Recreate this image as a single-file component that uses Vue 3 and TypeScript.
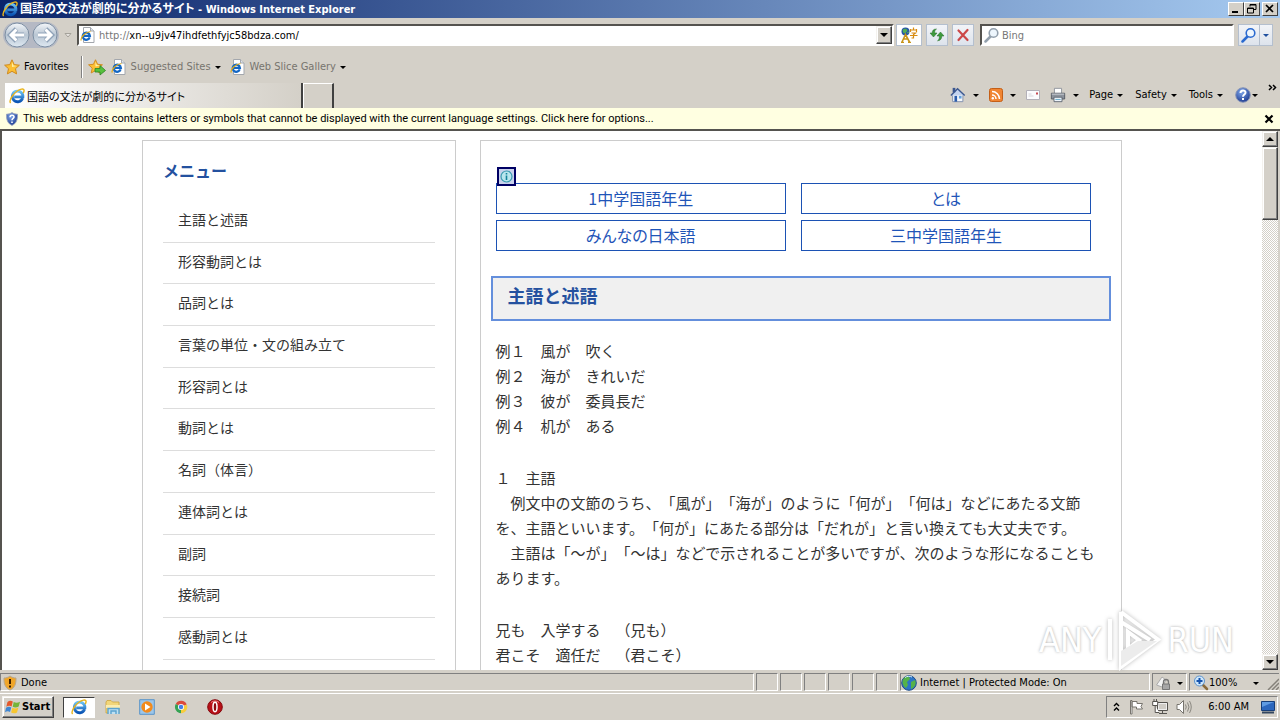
<script setup lang="ts">
import { ref } from 'vue'

const siteTitle = '国語の文法が劇的に分かるサイト'
const address = ref('xn--u9jv47ihdfethfyjc58bdza.com/')
const query = ref('')

const menu: string[] = [
  '主語と述語', '形容動詞とは', '品詞とは', '言葉の単位・文の組み立て', '形容詞とは', '動詞とは',
  '名詞（体言）', '連体詞とは', '副詞', '接続詞', '感動詞とは',
]
const adLinks: string[] = ['1中学国語年生', 'とは', 'みんなの日本語', '三中学国語年生']
const paragraphs: string[][] = [
  ['例１　風が　吹く', '例２　海が　きれいだ', '例３　彼が　委員長だ', '例４　机が　ある'],
  [
    '１　主語',
    '　例文中の文節のうち、「風が」「海が」のように「何が」「何は」などにあたる文節',
    'を、主語といいます。「何が」にあたる部分は「だれが」と言い換えても大丈夫です。',
    '　主語は「～が」「～は」などで示されることが多いですが、次のような形になることも',
    'あります。',
  ],
  ['兄も　入学する　（兄も）', '君こそ　適任だ　（君こそ）'],
]
const commands: string[] = ['Page', 'Safety', 'Tools']
</script>

<template>
  <div class="desktop">
    <svg class="defs" aria-hidden="true">
      <linearGradient id="ieBlue" x1="0" y1="0" x2="0" y2="1">
        <stop offset="0" stop-color="#6cc4f5" /><stop offset="1" stop-color="#0b55b5" />
      </linearGradient>
      <linearGradient id="steel" x1="0" y1="0" x2="0" y2="1">
        <stop offset="0" stop-color="#f4f7fa" /><stop offset=".5" stop-color="#b9c6d3" /><stop offset="1" stop-color="#dfe9f2" />
      </linearGradient>
      <radialGradient id="ball" cx=".4" cy=".3" r=".8">
        <stop offset="0" stop-color="#7ea6ea" /><stop offset="1" stop-color="#132f86" />
      </radialGradient>
      <symbol id="ie" viewBox="0 0 16 16">
        <path d="M13.6 10.2A5.3 5.3 0 1 1 13.9 8.8H5.2" fill="none" stroke="url(#ieBlue)" stroke-width="2.8" />
        <path d="M1.6 15C-.8 12 6 2.600 12.500 1.100 15.500.4 15.600 2.800 14.200 5.200" fill="none" stroke="#e9b41c" stroke-width="1.400" />
      </symbol>
      <symbol id="iepage" viewBox="0 0 16 16">
        <path d="M3.500.5h7l3.500 3.500v11.500H3.500z" fill="#fff" stroke="#a3a7ad" />
        <path d="M10.500.5v3.500H14" fill="#dde3ea" stroke="#a3a7ad" />
        <path d="M9.700 10.400A3.600 3.600 0 1 1 9.900 8.800H4" fill="none" stroke="#1467c4" stroke-width="2.200" />
        <path d="M1.300 13.500C0 11 5 5 10.500 4.500" fill="none" stroke="#e2ab17" stroke-width="1.200" />
      </symbol>
      <symbol id="star" viewBox="0 0 16 16">
        <path d="M8 .8l2.200 4.800 5.200.6-3.900 3.500 1.100 5.200L8 12.300l-4.600 2.600 1.100-5.200L.6 6.200l5.200-.6z" fill="#fcbf33" stroke="#cf8a20" />
        <path d="M8 3l1.400 3.500 3.600.4-5 1z" fill="#fff0a6" />
      </symbol>
      <symbol id="help" viewBox="0 0 16 16">
        <circle cx="8" cy="8" r="7.300" fill="url(#ball)" stroke="#8a97b8" />
        <path d="M5.500 6C5.500 2.600 10.600 2.800 10.500 5.800 10.400 7.500 8 7.700 8 9.700M8 11v2" fill="none" stroke="#fff" stroke-width="2" />
      </symbol>
      <symbol id="lens" viewBox="0 0 16 16">
        <path d="M6.500 9.500L1.500 14.500" stroke="currentColor" stroke-width="2.500" stroke-linecap="round" />
        <circle cx="9.500" cy="6" r="4.300" fill="#eef6fd" stroke="currentColor" stroke-width="1.600" />
      </symbol>
    </svg>

    <header class="titlebar">
      <svg class="i16"><use href="#ie" /></svg>
      <h1><span class="jp">{{ siteTitle }}</span> - Windows Internet Explorer</h1>
      <div class="winbtns">
        <button aria-label="Minimize"><svg viewBox="0 0 14 12"><path d="M3 9h6" stroke="#000" stroke-width="2" /></svg></button>
        <button aria-label="Restore"><svg viewBox="0 0 14 12"><path d="M5 3.500V1.500h6v5H9M5 2h6M2.500 5h6v5h-6zM2 5.500h7" fill="none" stroke="#000" /></svg></button>
        <button class="close" aria-label="Close"><svg viewBox="0 0 14 12"><path d="M3 2l7 7M10 2L3 9" stroke="#000" stroke-width="1.700" /></svg></button>
      </div>
    </header>

    <div class="addressrow">
      <div class="nav">
        <button aria-label="Back">
          <svg viewBox="0 0 26 26"><circle cx="13" cy="13" r="12" fill="url(#steel)" stroke="#7d8fa3" /><path d="M20 13H8M12.500 7L6.500 13l6 6" fill="none" stroke="#8fa2b8" stroke-width="5" /><path d="M20 13H8M12.500 7.500L7 13l5.500 5.500" fill="none" stroke="#fff" stroke-width="3" /></svg>
        </button>
        <button aria-label="Forward">
          <svg viewBox="0 0 26 26"><circle cx="13" cy="13" r="12" fill="url(#steel)" stroke="#7d8fa3" /><path d="M6 13h12M13.500 7l6 6-6 6" fill="none" stroke="#8fa2b8" stroke-width="5" /><path d="M6 13h12M13.500 7.500L19 13l-5.500 5.500" fill="none" stroke="#fff" stroke-width="3" /></svg>
        </button>
      </div>
      <button class="hist" aria-label="Recent pages"><svg viewBox="0 0 8 5"><path d="M1 .5h6L4 4z" fill="#e8e6e2" stroke="#a5a29b" /></svg></button>
      <label class="field address">
        <svg class="i16"><use href="#iepage" /></svg>
        <span class="scheme">http://</span>
        <input v-model="address" aria-label="Address" spellcheck="false">
        <button class="raised" aria-label="Show addresses"><i class="tri big"></i></button>
      </label>
      <button class="tool wide" aria-label="Compatibility and language">
        <svg viewBox="0 0 18 16"><circle cx="5.500" cy="4.500" r="4" fill="#2456a8" /><path d="M3 3l2-1 2 1-1 2-2 1zM7 6l2-1" fill="#54ae52" stroke="#54ae52" /><path d="M10 3h7M13.500.5v3M10.500 2v3M16.500 2v3M11.500 6h4l-2 1.500v3.500h-2M10 8.500h7.500" fill="none" stroke="#d88c12" stroke-width="1.200" /><path d="M2 15L5.500 7.500 9.500 15M3.500 12h4.500M1 15.500h3M8 15.500h3" fill="none" stroke="#c89418" stroke-width="1.600" /></svg>
      </button>
      <button class="tool" aria-label="Refresh">
        <svg viewBox="0 0 16 16"><path d="M1 6l3.500 4L8 6H5.700C5.500 4 6 3 7.500 2 4.500 2 3.200 3.500 3.200 6z" fill="#3e9a3c" stroke="#256c2b" stroke-width=".5" /><path d="M8 9l3.500-4L15 9h-2.200c0 3-1.500 4.600-4.300 4.800C10 12.800 10.500 11.500 10.300 9z" fill="#3e9a3c" stroke="#256c2b" stroke-width=".5" /></svg>
      </button>
      <button class="tool stop" aria-label="Stop">
        <svg viewBox="0 0 16 16"><path d="M3.500 3.500l9 9.500M12.500 3L3.500 13" stroke="#cc4848" stroke-width="2.200" stroke-linecap="round" /></svg>
      </button>
      <label class="field search">
        <svg class="i16 grey"><use href="#lens" /></svg>
        <input v-model="query" placeholder="Bing" aria-label="Search with Bing">
      </label>
      <div class="go">
        <button class="tool" aria-label="Search"><svg class="blue" viewBox="0 0 16 16"><use href="#lens" /></svg></button>
        <button class="tool slim" aria-label="Search options"><i class="tri navy"></i></button>
      </div>
    </div>

    <nav class="favrow" aria-label="Favorites bar">
      <button class="flat fav"><svg class="i16"><use href="#star" /></svg>Favorites</button>
      <span class="rule"></span>
      <button class="flat addfav" aria-label="Add to Favorites bar">
        <svg class="i18" viewBox="0 0 18 16"><use href="#star" width="15" height="15" /><path d="M7 9.500h5V6.500l5.500 5-5.500 4.500V13H7z" fill="#57c03d" stroke="#2c8425" stroke-width=".8" /></svg>
      </button>
      <button class="flat dim"><svg class="i16"><use href="#iepage" /></svg>Suggested Sites<i class="tri"></i></button>
      <button class="flat dim"><svg class="i16"><use href="#iepage" /></svg>Web Slice Gallery<i class="tri"></i></button>
    </nav>

    <div class="tabrow">
      <button class="tab"><svg class="i16"><use href="#ie" /></svg><span class="jp">{{ siteTitle }}</span></button>
      <button class="newtab" aria-label="New tab"></button>
      <div class="cmds">
        <button class="flat pic" aria-label="Home">
          <svg class="i16" viewBox="0 0 18 18"><path d="M3 9v7.500h11.500V8" fill="#f5f8fc" stroke="#7a8aa8" /><path d="M1 9.500L8.500 2l8 7.500" fill="#c3d3ee" stroke="#3b578f" stroke-width="1.600" /><path d="M3 1h3v5H3z" fill="#3b578f" /><path d="M5 10h3v6.500H5z" fill="#2b5cab" /><path d="M10 10h3v3h-3z" fill="#63a0dc" /></svg>
          <i class="tri"></i>
        </button>
        <button class="flat pic" aria-label="Feeds">
          <svg class="i14" viewBox="0 0 14 14"><rect x=".5" y=".5" width="13" height="13" rx="2" fill="#f08532" stroke="#c45f17" /><path d="M3 7a4 4 0 0 1 4 4M3 3.500A7.500 7.500 0 0 1 10.500 11" fill="none" stroke="#fff" stroke-width="1.500" /><circle cx="3.800" cy="10.300" r="1.200" fill="#fff" /></svg>
          <i class="tri"></i>
        </button>
        <button class="flat" aria-label="Read mail">
          <svg class="i14" viewBox="0 0 14 14"><path d="M.5 2.500h13v9H.5z" fill="#fbfbfd" stroke="#b3b0b8" /><path d="M2.500 8h5M2.500 6h3" stroke="#d5d3da" /><path d="M10 4.500h2v2h-2z" fill="#c84a52" /></svg>
        </button>
        <button class="flat pic" aria-label="Print">
          <svg class="i16" viewBox="0 0 18 18"><path d="M5 7V1.500h8V7" fill="#fff" stroke="#8a8f98" /><path d="M1.500 7h15v6.500h-15z" fill="#8c929c" stroke="#525860" /><path d="M2 8h14" stroke="#d4d8de" /><path d="M4.500 11.500h9v5h-9z" fill="#eef5fb" stroke="#5c6470" /><path d="M6 14h6" stroke="#5aa2c4" /></svg>
          <i class="tri"></i>
        </button>
        <button v-for="c in commands" :key="c" class="flat word">{{ c }}<i class="tri"></i></button>
        <button class="flat tight" aria-label="Help"><svg class="i16"><use href="#help" /></svg><i class="tri"></i></button>
        <button class="flat more" aria-label="More commands"><svg viewBox="0 0 10 8"><path d="M1 1l2.500 2.500L1 6M5 1l2.500 2.500L5 6" fill="none" stroke="#000" stroke-width="1.500" /></svg></button>
      </div>
    </div>

    <div class="infobar" role="status">
      <svg class="i14" viewBox="0 0 14 16"><path d="M7 .7c2 1.300 4 1.800 6.300 1.800C13.500 9 12 13 7 15.300 2 13 .5 9 .7 2.500 3 2.500 5 2 7 .7z" fill="url(#ball)" stroke="#9aa5bd" /><path d="M4.800 6C4.800 3 9.400 3 9.300 5.800 9.200 7.400 7 7.500 7 9.400M7 10.800v1.800" fill="none" stroke="#fff" stroke-width="1.800" /></svg>
      <button class="flat msg">This web address contains letters or symbols that cannot be displayed with the current language settings. Click here for options...</button>
      <button class="flat" aria-label="Dismiss"><svg class="x" viewBox="0 0 10 10"><path d="M1.500 1.500l7 7M8.500 1.500l-7 7" stroke="#000" stroke-width="2.200" /></svg></button>
    </div>

    <div class="view">
      <div class="page">
        <div class="columns">
          <aside class="side">
            <h3>メニュー</h3>
            <ul>
              <li v-for="m in menu" :key="m"><a href="#">{{ m }}</a></li>
            </ul>
          </aside>
          <main class="article">
            <div class="ads">
              <button class="adinfo" aria-label="Ad information"><svg viewBox="0 0 15 15"><circle cx="7.500" cy="7.500" r="5.500" fill="#b9e6ee" stroke="#3a9bb0" stroke-width="1.200" /><path d="M7.500 6.500v4.500M7.500 4v1.500" stroke="#14839b" stroke-width="1.600" /></svg></button>
              <a v-for="a in adLinks" :key="a" href="#">{{ a }}</a>
            </div>
            <h2>主語と述語</h2>
            <p v-for="(p, i) in paragraphs" :key="i">
              <template v-for="(line, j) in p" :key="j"><br v-if="j">{{ line }}</template>
            </p>
          </main>
        </div>
      </div>
      <div class="scroll" aria-hidden="true">
        <button class="raised" tabindex="-1"><i class="tri big up"></i></button>
        <div class="thumb raised"></div>
        <div class="track"></div>
        <button class="raised" tabindex="-1"><i class="tri big"></i></button>
      </div>
      <div class="mark">
        <span>ANY</span>
        <svg viewBox="0 0 58 64"><path d="M5 11v41M16 4l37 27.500L16 59V4M16 14l29 18M23 24v17l11-9z" fill="none" stroke="#fff" stroke-width="4" /><path d="M16 43v15l36-25H33z" fill="#ececec" /></svg>
        <span>RUN</span>
      </div>
    </div>

    <footer class="status">
      <div class="cell done">
        <svg class="i16" viewBox="0 0 16 16"><path d="M8 1c2 1.500 4 2 6 2 .3 6-1.500 10-6 12C3.500 13 1.700 9 2 3c2 0 4-.5 6-2z" fill="#f0a62a" stroke="#b5a790" /><path d="M8 4v5M8 10.500v2" stroke="#3d2000" stroke-width="2" /></svg>
        Done
      </div>
      <div v-for="n in 6" :key="n" class="cell slot"></div>
      <div class="cell zone">
        <svg class="i16" viewBox="0 0 16 16"><circle cx="8" cy="8" r="7.300" fill="#2c74c6" stroke="#1f4c88" /><path d="M3 3c3-3 6-1 6 1L6 7l1 3-2 3C2 11 0 7 3 3zM10 7l4-2c2 4-1 8-4 9z" fill="#55b248" /><path d="M4 2.500c2-1.500 5-1.500 7-.5" stroke="#d8f0ff" fill="none" /></svg>
        Internet | Protected Mode: On
      </div>
      <div class="cell prot">
        <svg class="i16" viewBox="0 0 16 16"><path d="M.5 10L6 2l4 3-4 7z" fill="#f3f3f3" stroke="#aaa" /><path d="M7.500 9V7a2 2 0 0 1 5 0v2" fill="none" stroke="#777" stroke-width="1.300" /><path d="M6.500 9h7v5.500h-7z" fill="#a6a6a6" stroke="#777" /></svg>
        <i class="tri"></i>
      </div>
      <div class="cell zoom">
        <svg class="i16" viewBox="0 0 16 16"><path d="M9 9l5 5" stroke="#8a6b3a" stroke-width="2.500" stroke-linecap="round" /><circle cx="6.500" cy="6" r="5" fill="#cde6fa" stroke="#5e93cc" /><path d="M3.500 6h6M6.500 3v6" stroke="#1553ad" stroke-width="2" /></svg>
        100%<i class="tri"></i>
        <svg class="grip" viewBox="0 0 12 12"><path d="M1 12L12 1M5 12l7-7M9 12l3-3" stroke="#85817a" stroke-width="1.500" /></svg>
      </div>
    </footer>

    <footer class="taskbar">
      <button class="start raised">
        <svg class="i16" viewBox="0 0 16 16"><path d="M2.500 3C4.500 1.500 6 1.600 7.800 2.600L6.600 7.400C5 6.500 3.300 6.500 1.300 7.700z" fill="#e5582a" /><path d="M8.700 3c2 1 4 1 6.300-.3L13.700 7.500c-2 1.200-4 1.300-6 .3z" fill="#74b43a" /><path d="M1 8.700c2-1.300 3.700-1.300 5.300-.3L5 13c-1.600-.9-3.300-.9-5 .3z" fill="#3f86d2" /><path d="M7.400 8.800c2 1 4 .9 6-.2L12 13.400c-2 1.200-4 1.200-5.900.1z" fill="#f7c62f" /></svg>
        Start
      </button>
      <button class="task on" aria-label="Internet Explorer"><svg class="i16"><use href="#ie" /></svg></button>
      <button class="task" aria-label="Explorer"><svg class="i16" viewBox="0 0 16 16"><path d="M1 3l1-1.500h4L7.500 3H14v11H1z" fill="#f2d67a" stroke="#cda53e" stroke-width=".8" /><path d="M1 6h14v3H1z" fill="#fbecaf" /><path d="M3 15V9.500h11V15M6 15v-3h5v3" fill="#bfe0f2" stroke="#5ba3cf" stroke-width="1.400" /></svg></button>
      <button class="task" aria-label="Media Player"><svg class="i16" viewBox="0 0 16 16"><path d="M.7.7h14.600v14.600H.7z" fill="#9cc6ea" stroke="#5b94c8" /><circle cx="8" cy="8" r="5.700" fill="#f28a1c" /><path d="M6 4.500v7l5.500-3.500z" fill="#fff" /></svg></button>
      <button class="task" aria-label="Chrome"><svg class="i14" viewBox="0 0 16 16"><path d="M8 8L2 4.500A7 7 0 0 1 14.500 5z" fill="#db4a3c" /><path d="M8 8l6.500-3A7 7 0 0 1 8 15z" fill="#f7cd3d" /><path d="M8 8v7A7 7 0 0 1 2 4.500z" fill="#35a253" /><circle cx="8" cy="8" r="3.500" fill="#fff" /><circle cx="8" cy="8" r="2.600" fill="#447fe8" /></svg></button>
      <button class="task" aria-label="Opera"><svg class="i16" viewBox="0 0 16 16"><circle cx="8" cy="8" r="7.300" fill="#b81018" stroke="#85070d" /><path d="M4 3.500A6 6 0 0 1 12 3.500" stroke="#ef8080" fill="none" /><ellipse cx="8" cy="8" rx="2" ry="4.700" fill="#8d0a10" stroke="#fff" stroke-width="1.500" /></svg></button>
      <div class="tray">
        <svg class="chev" viewBox="0 0 7 10"><path d="M1 4l2.500-2.500L6 4M1 8.500L3.500 6 6 8.500" fill="none" stroke="#000" stroke-width="1.400" /></svg>
        <svg class="i16" viewBox="0 0 16 16"><path d="M2.500 15V1.500h1.500V15zM4 2.500h5v2h5.500l-1.500 3 1.500 2.500H8.500v-2H4z" fill="#fff" stroke="#77746e" /></svg>
        <svg class="i16" viewBox="0 0 16 16"><path d="M5.500 3.500h10v8h-10z" fill="#eee" stroke="#55534f" /><path d="M7 5h7v5H7z" fill="#cfccc6" /><path d="M7 14.500h8M10.500 12v2" stroke="#55534f" /><path d="M.7 2.500h5v4h-5zM2 0v2.500M4.500 0v2.500M3.200 6.500v7h4" fill="#fff" stroke="#55534f" /></svg>
        <svg class="i16" viewBox="0 0 16 16"><path d="M1 5.500h2.500L7.500 1.500v13L3.500 10.500H1z" fill="#fff" stroke="#77746e" /><path d="M9.500 5.500q1.500 2.500 0 5M11.500 3.500q3 4.500 0 9M13.500 2q3.500 6 0 12" fill="none" stroke="#8a8780" /></svg>
        <time>6:00 AM</time>
        <svg class="i14" viewBox="0 0 14 14"><path d="M.5 1.500h13v9H.5z" fill="#2c67bd" stroke="#173e78" /><path d="M1 2h12L1 7z" fill="#5f9be2" /><path d="M1 12.500h12" stroke="#33465f" stroke-width="2" /></svg>
      </div>
    </footer>
  </div>
</template>

<style>
body { margin: 0; }
</style>

<style scoped>
* { box-sizing: border-box; }
.desktop {
  height: 100vh; display: flex; flex-direction: column; overflow: hidden;
  background: #d4d0c8; color: #000;
  font: 11px/16px "DejaVu Sans Condensed", "Noto Sans CJK JP", sans-serif;
  text-spacing-trim: space-all;
}
.defs { position: absolute; width: 0; height: 0; }
button, input { font: inherit; color: inherit; margin: 0; padding: 0; border: 0; background: none; }
input { min-width: 0; flex: 1; outline: 0; }
a { color: inherit; text-decoration: none; }
svg { display: block; flex: none; }
.i14 { width: 14px; height: 14px; }
.i16 { width: 16px; height: 16px; }
.i18 { width: 18px; height: 18px; }
.jp { font-family: "Noto Sans CJK JP", sans-serif; font-feature-settings: "palt"; }
.tri { display: block; flex: none; border: 3px solid transparent; border-top-color: #000; border-bottom: 0; }
.tri.big { border-width: 4px; border-bottom: 0; }
.tri.up { border-top: 0; border-bottom: 4px solid #000; }
.tri.navy { border-top-color: #1f4f9e; }
.raised {
  display: grid; place-items: center; background: #d4d0c8;
  border: 1px solid; border-color: #f4f2ee #404040 #404040 #f4f2ee;
  box-shadow: inset -1px -1px #808080, inset 1px 1px #fff;
}

.titlebar { display: flex; align-items: center; height: 18px; padding: 0 2px; gap: 2px; background: linear-gradient(90deg, #0a246a, #a6caf0); color: #fff; flex: none; }
.titlebar h1 { flex: 1; margin: 0; font: inherit; font-weight: 700; white-space: nowrap; }
.titlebar .jp { font-size: 12px; }
.winbtns { display: flex; }
.winbtns button { width: 16px; height: 14px; background: #d4d0c8; border: 1px solid; border-color: #fff #404040 #404040 #fff; }
.winbtns .close { margin-left: 2px; }
.winbtns svg { width: 14px; height: 12px; }

.addressrow { display: flex; align-items: center; height: 34px; padding: 0 7px 0 3px; flex: none; }
.nav { display: flex; gap: 2px; padding: 0 1px; border-radius: 14px; background: #b5b9c4; }
.nav svg { width: 26px; height: 26px; }
.hist { width: 18px; display: grid; place-items: center; }
.hist svg { width: 8px; height: 5px; }
.field { display: flex; align-items: center; height: 22px; background: #fff; border: 2px solid; border-color: #55534f #fff #fff #55534f; }
.field input, .scheme { padding-top: 2px; }
.address { flex: 1; padding-left: 1px; }
.scheme { margin-left: 3px; color: #777; }
.address .raised { width: 16px; height: 18px; }
.tool { display: grid; place-items: center; width: 22px; height: 22px; border: 1px solid #b4bfce; background: linear-gradient(#f2f4f8, #dde3ec); }
.tool svg { width: 16px; height: 16px; }
.tool.wide { width: 26px; margin: 0 4px 0 2px; background: #fff; }
.tool.wide svg { width: 18px; }
.tool.stop { margin: 0 6px 0 4px; }
.search { width: 20%; padding-left: 2px; gap: 2px; }
.search input::placeholder { color: #777; opacity: 1; }
.grey { color: #93a0ad; }
.blue { color: #2a6ad0; }
.go { display: flex; margin-left: 4px; }
.tool.slim { width: 13px; border-left: 0; }

.favrow { display: flex; align-items: center; height: 30px; padding-left: 4px; flex: none; }
.flat { display: flex; align-items: center; gap: 4px; white-space: nowrap; }
.rule { width: 2px; height: 22px; margin: 0 5px 0 12px; border-left: 1px solid #808080; border-right: 1px solid #fff; }
.addfav { margin-right: 5px; }
.dim { color: #77746e; margin-right: 9px; }

.tabrow { display: flex; align-items: flex-end; height: 26px; padding-left: 5px; flex: none; }
.tab { display: flex; align-items: center; gap: 2px; width: 298px; height: 25px; padding-left: 4px; background: linear-gradient(90deg, #fff, #d4d0c8); border-right: 2px solid #404040; }
.newtab { width: 31px; height: 25px; border: 1px solid #fff; border-right: 2px solid #404040; border-bottom: 0; }
.cmds { display: flex; align-items: center; gap: 10px; height: 26px; margin-left: auto; padding: 0 2px 0 0; }
.pic { gap: 7px; }
.word { padding-right: 2px; }
.tight { gap: 1px; }
.more { align-self: flex-start; padding-top: 2px; }
.more svg { width: 10px; height: 8px; }

.infobar { display: flex; align-items: center; gap: 4px; height: 21px; padding: 0 6px 0 5px; background: #ffffe1; flex: none; }
.msg { flex: 1; font-family: Roboto, sans-serif; }
.x { width: 10px; height: 10px; }

.view { position: relative; display: flex; flex: 1; min-height: 0; border: solid #55534f; border-width: 2px 0 0 2px; background: #fff; }
.page { flex: 1; overflow: hidden; font-family: "Noto Sans CJK JP", sans-serif; color: #333; }
.columns { display: flex; gap: 24px; max-width: 980px; height: 100%; margin: 0 auto; padding-top: 9px; }
.side, .article { border: 1px solid #ccc; border-bottom: 0; }
.side { flex: 0 0 32%; padding: 17px 20px 0; }
.side h3 { margin: 0; font-size: 16px; line-height: 24px; color: #24519f; }
.side ul { list-style: none; margin: 19px 0 0; padding: 0; }
.side li { padding: 8px 15px 11px; border-bottom: 1px solid #ddd; font-size: 14px; line-height: 1.55; }
.article { flex: 1; padding: 42px 10px 0; }
.ads { position: relative; display: grid; grid-template-columns: 1fr 1fr; gap: 6px 15px; margin: 0 20px 0 5px; }
.ads a { height: 31px; border: 1px solid #1c52b4; color: #1f55b8; font-size: 16px; line-height: 29px; text-align: center; font-feature-settings: "palt"; }
.adinfo { position: absolute; left: 1px; top: -16px; width: 19px; height: 19px; border: 2px solid #000064; background: #c9d2ec; }
.adinfo svg { width: 15px; height: 15px; }
.article h2 { margin: 25px 0 17px; padding: 4px 15px 11px; border: 2px solid #648fdc; background: #f0f0f0; color: #24519f; font-size: 18px; line-height: 26px; }
.article p { margin: 0 5px 27px; font-size: 15px; line-height: 25px; white-space: nowrap; }

.scroll { display: flex; flex-direction: column; width: 18px; padding-right: 2px; background: #d4d0c8; }
.scroll button { height: 16px; }
.thumb { height: 73px; }
.track { flex: 1; background: repeating-conic-gradient(#fff 0 25%, #d4d0c8 0 50%) 0 0 / 2px 2px; }

.mark { position: absolute; right: 46px; bottom: -2px; display: flex; align-items: center; gap: 4px; font-size: 34px; line-height: 64px; color: #fff; text-shadow: 0 0 3px #aaa; pointer-events: none; }
.mark svg { width: 58px; height: 64px; filter: drop-shadow(0 0 2px #bbb); }

.status { display: flex; gap: 2px; height: 24px; padding: 3px 1px 2px 0; border-bottom: 1px solid #fff; flex: none; }
.cell { display: flex; align-items: center; padding-top: 2px; border: 1px solid; border-color: #808080 #fff #fff #808080; white-space: nowrap; }
.done { flex: 1; padding-left: 1px; gap: 3px; }
.slot { width: 22px; }
.zone { width: 250px; gap: 3px; }
.prot { width: 35px; gap: 5px; padding-left: 3px; }
.zoom { width: 90px; padding-left: 3px; border-right: 0; }
.zoom .tri { margin-left: auto; }
.grip { width: 12px; height: 12px; margin-left: 8px; align-self: flex-end; }

.taskbar { display: flex; align-items: center; height: 26px; padding: 0 2px; flex: none; }
.start { display: flex; gap: 1px; width: 52px; height: 22px; padding-left: 2px; font-weight: 700; }
.task { display: grid; place-items: center; width: 34px; height: 21px; }
.on { width: 32px; margin: 0 1px 0 9px; background: #fff; border: 1px solid; border-color: #404040 #fff #fff #404040; }
.tray { display: flex; align-items: center; gap: 8px; height: 22px; margin-left: auto; padding: 0 2px 0 6px; border: 1px solid; border-color: #808080 #fff #fff #808080; }
.chev { width: 7px; height: 10px; }
.tray time { margin: 0 4px 0 8px; }
</style>
